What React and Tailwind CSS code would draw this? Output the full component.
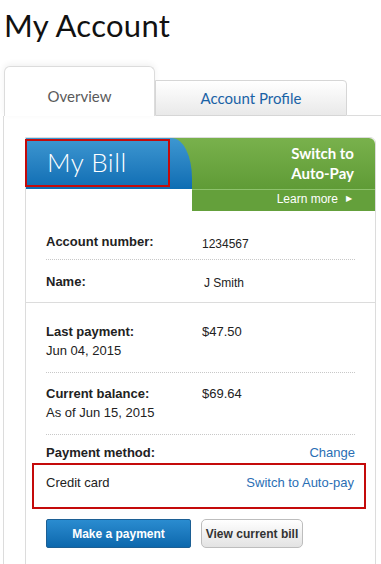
import React from 'react';

// Account overview screen: title, tabs, and the "My Bill" card
function InfoRow({ label, sub, value, dotted = true, className = '' }) {
  return (
    <div className={`flex ${dotted ? 'border-b border-dotted border-[#c8c8c8]' : ''} ${className}`}>
      <div className="w-[156px]">
        <div className="font-bold text-[13px] leading-[19px] text-[#222]">{label}</div>
        {sub && <div className="text-[13px] leading-[19px] text-[#222]">{sub}</div>}
      </div>
      <div className="text-[13px] leading-[19px] text-[#222]">{value}</div>
    </div>
  );
}

export default function App() {
  return (
    <div className="w-[381px] h-[564px] overflow-hidden bg-white font-['Liberation_Sans',Arial,sans-serif]">
      {/* page title */}
      <h1 className="pl-[4px] pt-[7px] text-[31px] leading-[36px] text-[#111] font-['Lato',sans-serif] font-normal tracking-[0.3px]">
        My Account
      </h1>

      {/* tabs */}
      <div className="mt-[23px] flex items-end h-[50px]">
        <div className="ml-[4px] w-[151px] h-[50px] bg-white border border-b-0 border-[#dcdcdc] rounded-t-[6px] shadow-[0_-2px_6px_rgba(0,0,0,0.06)] flex items-center justify-center pt-[9px]">
          <span className="text-[15px] text-[#5a5a5a] font-['Lato',sans-serif]">Overview</span>
        </div>
        <div className="w-[192px] h-[36px] bg-gradient-to-b from-white to-[#e9e9e9] border border-[#d6d6d6] rounded-tr-[4px] flex items-center justify-center">
          <span className="text-[15px] text-[#1a62a6] font-['Lato',sans-serif]">Account Profile</span>
        </div>
        <div className="flex-1 border-b border-[#dcdcdc]" />
      </div>

      {/* panel */}
      <div className="ml-[3px] border-l border-[#dcdcdc] pl-[21px] pt-[21px] h-[500px]">
        <div className="w-[351px] border border-[#dcdcdc] rounded-tr-[6px] h-[480px]">
          {/* header */}
          <div className="flex h-[51px] bg-gradient-to-b from-[#79b14c] to-[#5f9b36] rounded-tr-[6px]">
            <div className="relative w-[166px] h-full bg-gradient-to-b from-[#3d97d1] to-[#0c6db3] rounded-tr-[20px_40px]">
              <div className="absolute left-[-1px] top-[1px] w-[145px] h-[48px] border-2 border-[#c40a0a]" />
              <div className="pl-[21px] pt-[7px] text-[26px] leading-[34px] text-white font-['Lato',sans-serif] font-light tracking-[0.5px]">
                My Bill
              </div>
            </div>
            <div className="flex-1 text-right pr-[21px] pt-[5px] text-white font-bold text-[15px] leading-[20px] font-['Lato',sans-serif]">
              Switch to<br />Auto-Pay
            </div>
          </div>
          <div className="flex h-[22px]">
            <div className="w-[166px]" />
            <div className="flex-1 bg-[#64a03b] border-t border-[#8ec26c] flex items-center justify-end pr-[23px] pb-[3px] text-white text-[12px]">
              Learn more
              <span className="ml-[8px] text-[8px]">▶</span>
            </div>
          </div>

          {/* account info */}
          <div className="px-[20px] border-b border-[#dcdcdc]">
            <InfoRow label="Account number:" value={<span className="text-[12px] relative top-[2px]">1234567</span>} className="pt-[21px] pb-[7px]" />
            <InfoRow label="Name:" value={<span className="text-[12px] ml-[2px] relative top-[1px]">J Smith</span>} dotted={false} className="pt-[12px] pb-[10px]" />
          </div>

          {/* balance info */}
          <div className="px-[20px]">
            <InfoRow label="Last payment:" sub="Jun 04, 2015" value="$47.50" className="pt-[19px] pb-[12px]" />
            <InfoRow label="Current balance:" sub="As of Jun 15, 2015" value="$69.64" className="pt-[11px] pb-[12px]" />
            <div className="flex justify-between pt-[8px] text-[13px] leading-[19px]">
              <span className="font-bold text-[#222]">Payment method:</span>
              <span className="text-[#2a6eb4]">Change</span>
            </div>
            <div className="ml-[-14px] mr-[-11px] mt-[1px] border-2 border-[#c40a0a] pl-[12px] pr-[10px] pt-[8px] h-[46px] flex justify-between text-[13px] leading-[19px]">
              <span className="text-[#222]">Credit card</span>
              <span className="text-[#2a6eb4]">Switch to Auto-pay</span>
            </div>
            <div className="flex mt-[10px]">
              <button className="w-[145px] h-[29px] bg-gradient-to-b from-[#2a8cd0] to-[#0c68ad] border border-[#1c5f94] rounded-[2px] text-white font-bold text-[12px] whitespace-nowrap">
                Make a payment
              </button>
              <button className="ml-[10px] w-[102px] h-[29px] bg-gradient-to-b from-white to-[#e3e3e3] border border-[#bdbdbd] rounded-[5px] text-[#333] font-bold text-[12px] whitespace-nowrap">
                View current bill
              </button>
            </div>
          </div>
        </div>
      </div>
    </div>
  );
}
